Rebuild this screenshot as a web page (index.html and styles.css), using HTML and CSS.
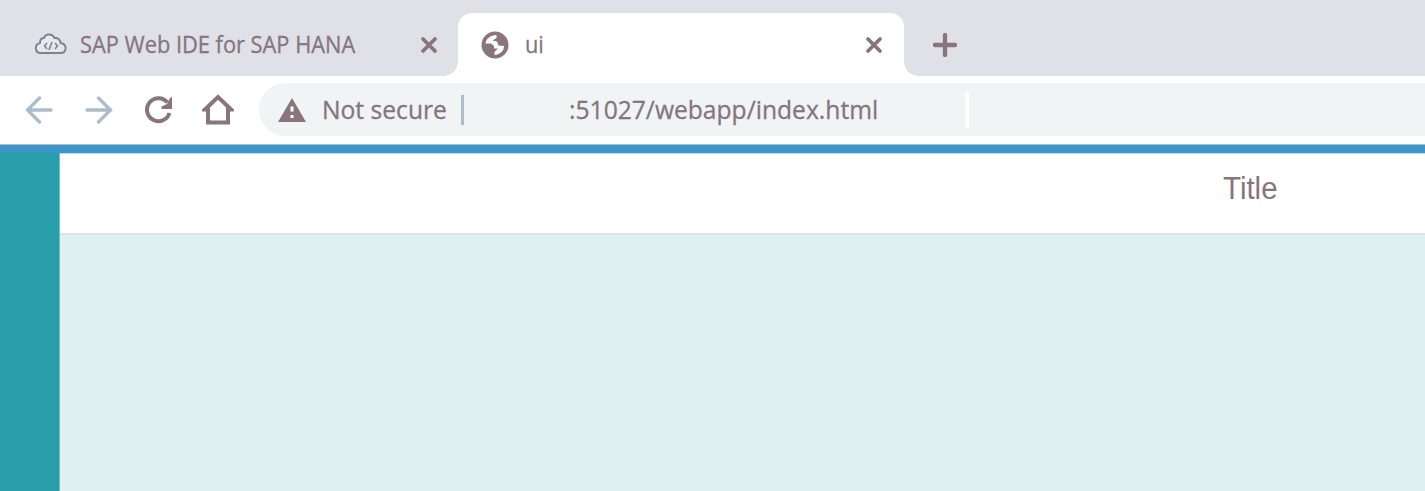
FILE: index.html
```html
<!DOCTYPE html>
<html lang="en">
<head>
<meta charset="utf-8">
<title>ui</title>
<link rel="stylesheet" href="styles.css">
</head>
<body>
<div class="browser">
  <header class="tabs">
    <div class="tab">
      <svg class="cloud" width="32" height="24" viewBox="0 0 32 24" fill="none" stroke="#83818d" stroke-width="1.900">
        <path fill="#e3eaef" d="M5.500 21C-.5 21-.5 12 5 11 5 7 7 6 9 6 10.500 1.500 17 1 19.500 6 23 5.500 25.500 8 25.500 11 30 12 31 14.500 30.500 17 30 20 28.500 21 26 21Z"/>
        <path stroke-width="1.600" d="m12 11-2.500 3 2.500 3m5-7-3 8M20 11l2.500 3-2.500 3"/>
      </svg>
      <span class="label tab-title">SAP Web IDE for SAP HANA</span>
      <svg class="close" width="18" height="18" viewBox="0 0 18 18"><path d="m3 3 12 12M15 3 3 15"/></svg>
    </div>
    <div class="tab active">
      <svg class="globe" width="28" height="28" viewBox="0 0 28 28">
        <circle cx="14" cy="14" r="13.500" fill="#89767c"/>
        <path fill="#fff" d="M15.500 4C10 4 5 7.500 4.500 12.500H10L13 15V17.500H17L13.500 21V24C19 23.500 23 20 23 15L17.500 14.500 16 10.500 11.500 9.500 15.500 7Z"/>
      </svg>
      <span class="label">ui</span>
      <svg class="close" width="18" height="18" viewBox="0 0 18 18"><path d="m3 3 12 12M15 3 3 15"/></svg>
    </div>
    <svg class="plus" width="24" height="24" viewBox="0 0 24 24"><path d="M12 2v20M2 12h20"/></svg>
  </header>
  <nav class="toolbar">
    <svg class="arrow" width="28" height="28" viewBox="0 0 28 28"><path d="M26 14H3M14.500 2 2.500 14l12 12"/></svg>
    <svg class="arrow" width="28" height="28" viewBox="0 0 28 28"><path d="M2 14h23M13.500 2l12 12-12 12"/></svg>
    <svg class="icon" width="28" height="28" viewBox="0 0 28 28"><path d="M24.500 17A11.500 11.500 0 1 1 22.500 6.500"/><path class="solid" d="M27 1v12H16.500V10.500L22 8 25 2Z"/></svg>
    <svg class="icon" width="32" height="32" viewBox="0 0 32 32"><path d="M3 15.500 16 3l13 12.500h-3V28.500H6V15.500Z"/></svg>
    <div class="address">
      <svg class="warning" width="28" height="24" viewBox="0 0 28 24"><path fill="#89767c" d="M14 0 28 24H0Z"/><path fill="#fff" d="M12.500 8.500h3v5h-3zM12.500 17h3v3h-3z"/></svg>
      <span class="label secure">Not secure</span>
      <i class="divider"></i>
      <span class="label url">:51027/webapp/index.html</span>
      <i class="gap-mark"></i>
    </div>
  </nav>
  <main class="page">
    <aside class="side"></aside>
    <section class="content">
      <h1 class="page-header"><span class="title">Title</span></h1>
    </section>
  </main>
</div>
</body>
</html>
```
FILE: styles.css
```css
* { box-sizing: border-box; }
body { margin: 0; overflow: hidden; font-family: "Open Sans", "Noto Sans", sans-serif; color: #85757f; }
svg { display: block; flex: none; }
.browser { display: flex; flex-direction: column; height: 491px; background: #fff; }
.tabs { display: flex; height: 76px; padding-top: 13px; background: #dfe1e6; }
.tab { display: flex; align-items: center; width: 458px; padding: 0 20px 0 34px; }
.active { position: relative; width: 446px; padding: 0 21px 0 23px; background: #fff; border-radius: 14px 14px 0 0; }
.active::before, .active::after { content: ""; position: absolute; bottom: 0; width: 14px; height: 14px; }
.active::before { left: -14px; background: radial-gradient(circle at 0 0, transparent 13.5px, #fff 14px); }
.active::after { right: -14px; background: radial-gradient(circle at 100% 0, transparent 13.5px, #fff 14px); }
.label { display: block; margin-bottom: 2px; white-space: nowrap; transform-origin: left center; transform: scaleX(.948); line-height: 32px; font-size: 23px; -webkit-text-stroke: .3px; }
.cloud { margin: 0 13px 2px 1px; }
.globe { margin-right: 16px; }
.tab-title { width: 275px; }
.close { margin-left: auto; fill: none; stroke: #89767c; stroke-width: 3.8; stroke-linecap: round; }
.plus { margin: 20px 0 0 29px; fill: none; stroke: #89767c; stroke-width: 4.3; stroke-linecap: round; }
.toolbar { display: flex; align-items: center; height: 68px; padding: 0 0 1px 25px; }
.arrow { margin-right: 32px; fill: none; stroke: #aabdc9; stroke-width: 3.3; stroke-linecap: round; }
.icon { margin-right: 29px; fill: none; stroke: #89767c; stroke-width: 4; }
.icon + .icon { margin-right: 25px; }
.icon .solid { fill: #89767c; stroke: none; }
.address { display: flex; align-items: center; flex: 1; height: 53px; padding-left: 19px; border-radius: 27px 0 0 27px; background: #f1f4f4; }
.warning { margin-right: 16px; }
.address .label { font-size: 25px; transform: scaleX(.985); }
.secure { width: 125px; }
.divider { width: 3px; height: 30px; margin: 0 105px 0 14px; background: #aabdc9; }
.url { width: 309px; }
.gap-mark { width: 4px; height: 36px; margin-left: 87px; background: #fff; }
.page { display: flex; flex: 1; border-top: 8px solid #3c96ca; box-shadow: 0 -1px #aabdc9; margin-top: 1px; }
.side { width: 60px; background: #289eab; border-right: 1px solid #80b5c8; }
.content { flex: 1; background: #dff0f0; }
.page-header { display: flex; height: 82px; margin: 0; padding: 17px 0 0 1163px; background: #fff; border-top: 1px solid #c5dce4; border-bottom: 2px solid #dfe1e6; }
.title { font: 31px/36px "Liberation Sans", Arial, sans-serif; transform-origin: left center; transform: scaleX(.95); }
```
